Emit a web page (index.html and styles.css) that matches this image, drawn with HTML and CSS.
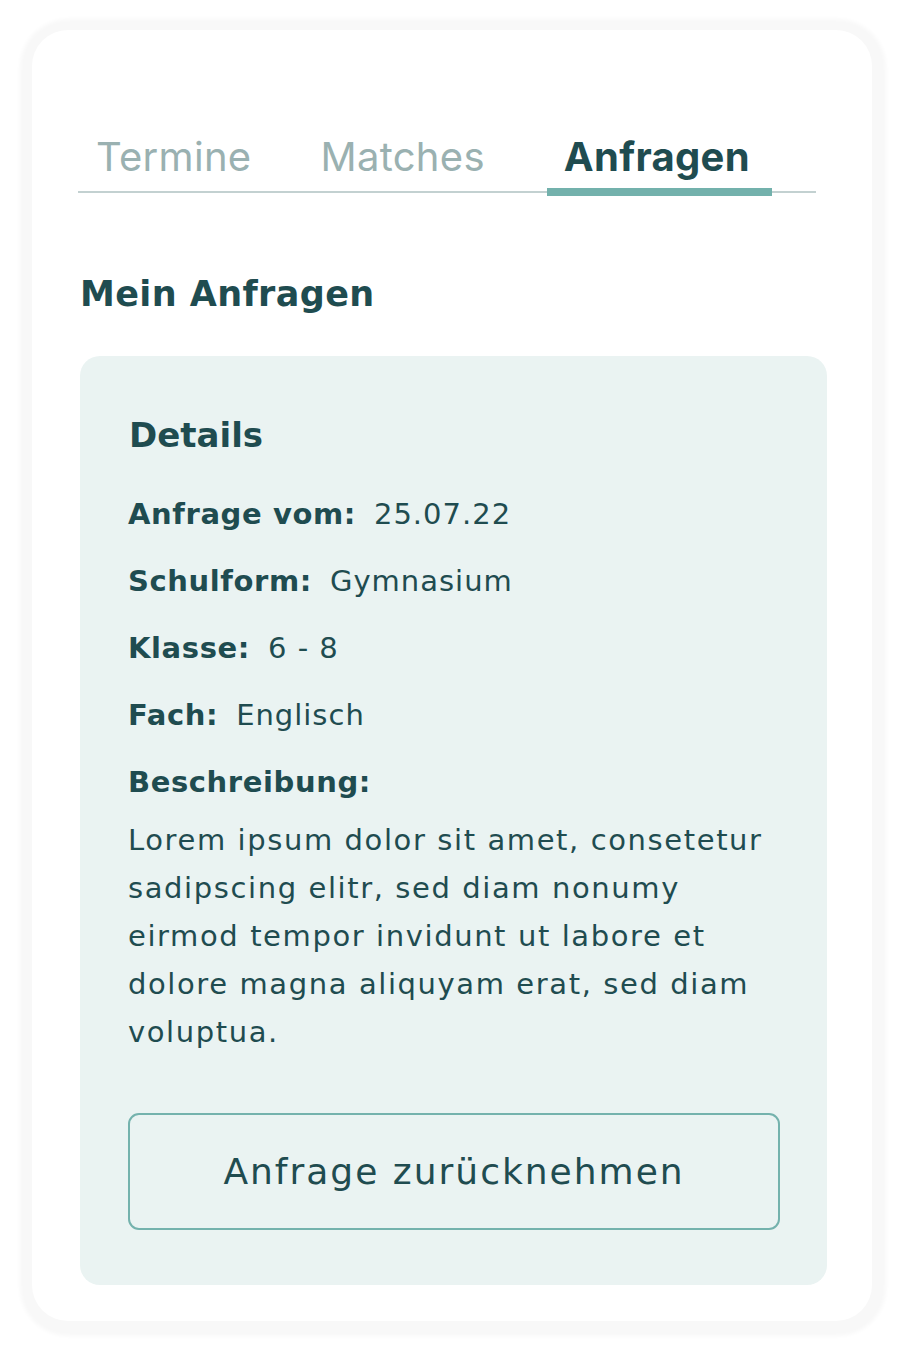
FILE: index.html
```html
<!DOCTYPE html>
<html lang="de">
<head>
<meta charset="utf-8">
<title>Anfragen</title>
<link rel="stylesheet" href="styles.css">
</head>
<body>
<div class="page">
  <div class="card">
    <nav class="tabs">
      <div class="tab">Termine</div>
      <div class="tab">Matches</div>
      <div class="tab active">Anfragen</div>
    </nav>
    <h1 class="title">Mein Anfragen</h1>
    <section class="panel">
      <h2 class="panel-title">Details</h2>
      <div class="row"><span class="label">Anfrage vom:</span><span class="value">25.07.22</span></div>
      <div class="row"><span class="label">Schulform:</span><span class="value">Gymnasium</span></div>
      <div class="row"><span class="label">Klasse:</span><span class="value">6 - 8</span></div>
      <div class="row"><span class="label">Fach:</span><span class="value">Englisch</span></div>
      <div class="row"><span class="label">Beschreibung:</span></div>
      <p class="desc">Lorem ipsum dolor sit amet, consetetur sadipscing elitr, sed diam nonumy eirmod tempor invidunt ut labore et dolore magna aliquyam erat, sed diam voluptua.</p>
      <button class="btn">Anfrage zurücknehmen</button>
    </section>
  </div>
</div>
</body>
</html>
```

FILE: styles.css
```css
* { box-sizing: border-box; }
html, body { margin: 0; padding: 0; background: #ffffff; }
body {
  font-family: "DejaVu Sans", "Noto Sans", sans-serif;
  color: #1f4c50;
}
.page {
  padding: 30px 31px 30px 32px;
}
.card {
  width: 840px;
  background: #ffffff;
  border-radius: 36px;
  box-shadow: 1px 2px 4px 13px rgba(20, 40, 40, 0.032);
  padding: 103px 45px 36px 46px;
}
.tabs {
  display: flex;
  width: 738px;
  border-bottom: 2px solid #c3d1d1;
  gap: 35px;
  padding-left: 1px;
  font-family: "Inter", "Noto Sans", sans-serif;
}
.tab {
  position: relative;
  padding: 0 17px 10px;
  font-size: 40px;
  line-height: 48px;
  color: #9ab1b1;
  letter-spacing: 0.3px;
}
.tab.active {
  color: #1f4c50;
  font-weight: 700;
  margin-left: 10px;
  padding-right: 22px;
}
.tab.active::after {
  content: "";
  position: absolute;
  left: 0;
  right: 0;
  bottom: -5px;
  height: 8px;
  background: #73b1ac;
}
.title {
  margin: 79px 0 0 2px;
  font-size: 35px;
  line-height: 44px;
  font-weight: 700;
  letter-spacing: 0.4px;
}
.panel {
  margin-top: 40px;
  margin-left: 2px;
  width: 747px;
  background: #eaf3f2;
  border-radius: 20px;
  padding: 58px 47px 55px 48px;
}
.panel-title {
  margin: 0 0 40px 1px;
  font-size: 34px;
  line-height: 42px;
  font-weight: 700;
}
.row {
  display: flex;
  align-items: baseline;
  gap: 18px;
  font-size: 29px;
  line-height: 36px;
  margin-bottom: 31px;
}
.row:nth-of-type(5) { margin-bottom: 0; }
.label { font-weight: 700; letter-spacing: 0.6px; }
.value { font-weight: 400; letter-spacing: 1px; }
.desc {
  margin: 16px 0 0;
  font-size: 29px;
  line-height: 48px;
  letter-spacing: 1.6px;
}
.btn {
  display: block;
  width: 652px;
  height: 117px;
  margin-top: 57px;
  background: transparent;
  border: 2px solid #74b2ad;
  border-radius: 11px;
  font-family: inherit;
  font-size: 36px;
  font-weight: 400;
  letter-spacing: 2px;
  color: #1f4c50;
  cursor: pointer;
}
```
